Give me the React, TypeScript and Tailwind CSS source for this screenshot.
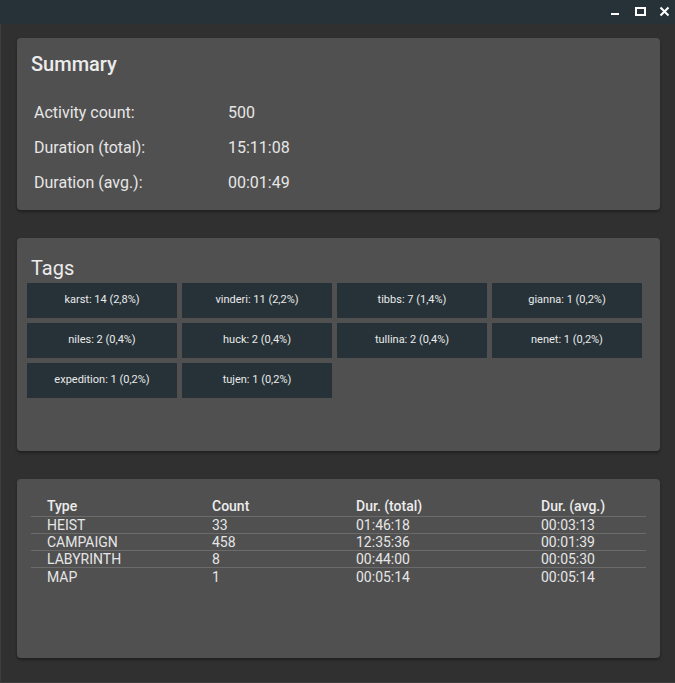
import React from "react";

const summaryRows = [
  { label: "Activity count:", value: "500" },
  { label: "Duration (total):", value: "15:11:08" },
  { label: "Duration (avg.):", value: "00:01:49" },
];

const tags = [
  "karst: 14 (2,8%)",
  "vinderi: 11 (2,2%)",
  "tibbs: 7 (1,4%)",
  "gianna: 1 (0,2%)",
  "niles: 2 (0,4%)",
  "huck: 2 (0,4%)",
  "tullina: 2 (0,4%)",
  "nenet: 1 (0,2%)",
  "expedition: 1 (0,2%)",
  "tujen: 1 (0,2%)",
];

const typeRows = [
  ["HEIST", "33", "01:46:18", "00:03:13"],
  ["CAMPAIGN", "458", "12:35:36", "00:01:39"],
  ["LABYRINTH", "8", "00:44:00", "00:05:30"],
  ["MAP", "1", "00:05:14", "00:05:14"],
];

const cardClasses = "rounded-[4px] bg-[#505050] shadow-[0_2px_3px_rgba(0,0,0,0.35)]";

function TitleBar() {
  return (
    <div className="flex h-6 shrink-0 items-center justify-end bg-[#263238] pr-[4px]">
      {/* minimize */}
      <svg width="24" height="24" viewBox="0 0 24 24" className="text-white">
        <rect x="0" y="13" width="8" height="2" fill="currentColor" />
      </svg>
      {/* maximize */}
      <svg width="24" height="24" viewBox="0 0 24 24" className="text-white">
        <rect x="1" y="8" width="9" height="7" fill="none" stroke="currentColor" strokeWidth="2" />
      </svg>
      {/* close */}
      <svg width="12" height="24" viewBox="0 0 12 24" className="text-white">
        <path d="M1.5 7.5 L9.5 15.5 M9.5 7.5 L1.5 15.5" stroke="currentColor" strokeWidth="2" fill="none" />
      </svg>
    </div>
  );
}

function SummaryCard() {
  return (
    <div className={`${cardClasses} h-[172px] pt-3`}>
      <h2 className="pl-[14px] text-[20px] leading-7 font-medium text-[#ececec]">Summary</h2>
      <div className="mt-[17px]">
        {summaryRows.map((row) => (
          <div key={row.label} className="flex h-[35px] items-center pl-[17px] text-[16px] text-[#e6e6e6]">
            <span className="w-[194px]">{row.label}</span>
            <span>{row.value}</span>
          </div>
        ))}
      </div>
    </div>
  );
}

function TagsCard() {
  return (
    <div className={`${cardClasses} h-[213px] pt-[16px]`}>
      <h2 className="pl-[14px] text-[20px] leading-7 text-[#ececec]">Tags</h2>
      <div className="mt-[1px] grid grid-cols-[repeat(4,150px)] gap-[5px] pl-[10px]">
        {tags.map((tag) => (
          <div
            key={tag}
            className="flex h-[35px] items-center justify-center bg-[#263238] text-[11px] text-[#eaeaea]"
          >
            {tag}
          </div>
        ))}
      </div>
    </div>
  );
}

function TypesCard() {
  const cols = "grid grid-cols-[165px_144px_185px_121px]";
  return (
    <div className={`${cardClasses} h-[179px] px-[14px] pt-[14px]`}>
      <div className={`${cols} h-[24px] items-center border-b border-[#6b6b6b] pt-[3px] text-[14px] font-medium text-[#ececec]`}>
        <span className="pl-4">Type</span>
        <span className="pl-4">Count</span>
        <span className="pl-4">Dur. (total)</span>
        <span className="pl-4">Dur. (avg.)</span>
      </div>
      {typeRows.map((row, i) => (
        <div
          key={row[0]}
          className={`${cols} h-[17px] items-center text-[14px] leading-4 text-[#e6e6e6] ${
            i < typeRows.length - 1 ? "border-b border-[#6b6b6b]" : ""
          }`}
        >
          {row.map((cell, j) => (
            <span key={j} className="pl-4">
              {cell}
            </span>
          ))}
        </div>
      ))}
    </div>
  );
}

export default function App() {
  return (
    <div className="flex h-[683px] w-[675px] flex-col overflow-hidden bg-[#303030] font-['Roboto',sans-serif]">
      <TitleBar />
      <div className="flex flex-1 flex-col gap-[28px] border-b border-l border-[#3d3d3d] pt-[14px] pr-[15px] pl-4">
        <SummaryCard />
        <TagsCard />
        <TypesCard />
      </div>
    </div>
  );
}
